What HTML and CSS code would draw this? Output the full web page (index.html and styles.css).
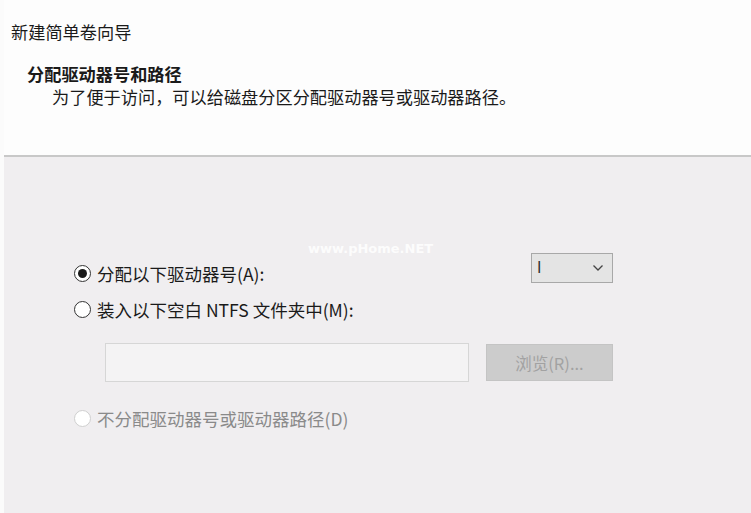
FILE: index.html
```html
<!DOCTYPE html>
<html lang="zh-CN">
<head>
  <meta charset="UTF-8" />
  <title>新建简单卷向导</title>
  <link rel="stylesheet" href="styles.css">
</head>
<body>
  <div class="dialog">
    <div class="header">
      <div class="caption">新建简单卷向导</div>
      <div class="heading">分配驱动器号和路径</div>
      <div class="subtitle">为了便于访问，可以给磁盘分区分配驱动器号或驱动器路径。</div>
    </div>

    <div class="content">
      <div class="watermark">www.pHome.NET</div>

      <div class="row first">
        <label class="option">
          <span class="radio checked"></span>
          <span>分配以下驱动器号(A):</span>
        </label>
        <div class="select">
          <span class="value">I</span>
          <svg class="chevron" width="12" height="8" viewBox="0 0 12 8">
            <path d="M1.5 1.5 L6 6 L10.5 1.5" fill="none" stroke="#444" stroke-width="1.3" />
          </svg>
        </div>
      </div>

      <div class="row">
        <label class="option">
          <span class="radio"></span>
          <span>装入以下空白 NTFS 文件夹中(M):</span>
        </label>
      </div>

      <div class="folder">
        <div class="input"></div>
        <div class="button">浏览(R)...</div>
      </div>

      <div class="row last">
        <label class="option disabled">
          <span class="radio"></span>
          <span>不分配驱动器号或驱动器路径(D)</span>
        </label>
      </div>
    </div>
  </div>
</body>
</html>
```

FILE: styles.css
```css
html, body {
  margin: 0;
  height: 100%;
}

body {
  background: #fbfbfb;
  font-family: "Noto Sans CJK SC", "Noto Sans", sans-serif;
  color: #1a1a1a;
}

.dialog {
  margin-left: 4px;
  height: 100%;
  display: flex;
  flex-direction: column;
}

.header {
  background: #fdfdfd;
  height: 157px;
  padding: 20px 0 0 6px;
  box-sizing: border-box;
  border-bottom: 2px solid #c8c8c8;
  font-size: 17.2px;
  line-height: 23px;
}

.caption {
  margin: 0 0 19px 1px;
}

.heading {
  font-weight: bold;
  padding-left: 17px;
}

.subtitle {
  padding-left: 42px;
}

.content {
  position: relative;
  flex: 1;
  background: #f0eef0;
  padding: 96px 0 0 70px;
  font-size: 17.5px;
}

.watermark {
  position: absolute;
  left: 304px;
  top: 84px;
  font-family: "DejaVu Sans", sans-serif;
  font-weight: bold;
  font-size: 13px;
  color: #ffffff;
  opacity: 0.85;
}

.row {
  width: 539px;
  height: 24px;
  display: flex;
  align-items: center;
  justify-content: space-between;
  margin-top: 11px;
}

.row.first {
  height: 33px;
  margin-top: 0;
  align-items: flex-end;
}

.row.first .select {
  align-self: flex-start;
}

.row.last {
  margin-top: 24px;
}

.option {
  display: flex;
  align-items: center;
  gap: 6px;
}

.radio {
  width: 17px;
  height: 17px;
  box-sizing: border-box;
  border: 1.6px solid #333;
  border-radius: 50%;
  background: #fff;
  display: flex;
  align-items: center;
  justify-content: center;
}

.radio.checked::after {
  content: "";
  width: 9px;
  height: 9px;
  border-radius: 50%;
  background: #1a1a1a;
}

.option.disabled {
  color: #8a8a8a;
}

.option.disabled .radio {
  border-color: #cfcfcf;
}

.select {
  width: 82px;
  height: 30px;
  box-sizing: border-box;
  border: 1px solid #a8a8a8;
  background: #e4e4e4;
  display: flex;
  align-items: center;
  justify-content: space-between;
  padding: 0 8px 0 5px;
}

.select .value {
  font-family: "Liberation Sans", sans-serif;
  font-size: 16px;
  color: #333;
}

.folder {
  display: flex;
  gap: 17px;
  margin: 22px 0 0 31px;
}

.input {
  width: 364px;
  height: 39px;
  box-sizing: border-box;
  border: 1px solid #d6d6d6;
  background: #f4f3f4;
}

.button {
  width: 127px;
  height: 37px;
  margin-top: 1px;
  box-sizing: border-box;
  border: 1px solid #c4c4c4;
  background: #cccccc;
  color: #a2a2a2;
  font-size: 16.5px;
  display: flex;
  align-items: center;
  justify-content: center;
}
```
